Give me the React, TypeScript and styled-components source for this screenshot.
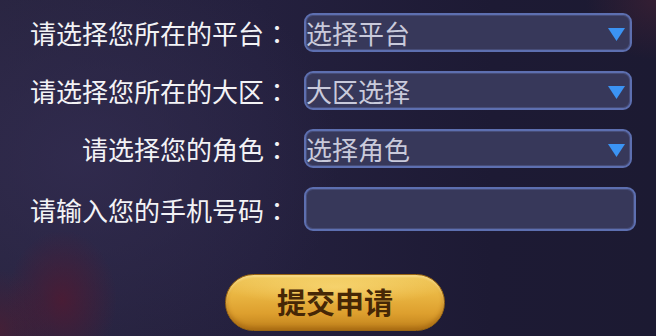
import React from "react";
import styled, { createGlobalStyle } from "styled-components";

const Global = createGlobalStyle`
  html, body { margin: 0; padding: 0; }
  body {
    width: 656px;
    height: 336px;
    overflow: hidden;
    font-family: "Noto Sans CJK SC", "Noto Sans", sans-serif;
  }
`;

const Page = styled.div`
  position: relative;
  width: 656px;
  height: 336px;
  overflow: hidden;
  background:
    radial-gradient(ellipse 55px 70px at 62px 300px, rgba(80, 26, 50, 0.8), rgba(80, 26, 50, 0) 100%),
    radial-gradient(ellipse 50px 60px at 0px 330px, rgba(85, 28, 48, 0.6), rgba(85, 28, 48, 0) 100%),
    radial-gradient(ellipse 70px 60px at 656px 0px, rgba(72, 34, 52, 0.55), rgba(72, 34, 52, 0) 100%),
    radial-gradient(ellipse 260px 220px at 80px 160px, rgba(50, 44, 80, 0.85), rgba(50, 44, 80, 0) 100%),
    linear-gradient(90deg, #28243f 0%, #24203e 40%, #1d1a34 75%, #1c1a32 100%);
  display: flex;
  flex-direction: column;
`;

const Form = styled.div`
  display: grid;
  grid-template-columns: 290px 332px;
  column-gap: 14px;
  row-gap: 19px;
  padding-top: 13px;
  align-items: center;
`;

const Label = styled.div`
  color: #f3f3f6;
  font-family: "Noto Sans CJK SC", "Noto Sans CJK JP", sans-serif;
  font-size: 26px;
  line-height: 39px;
  text-align: right;
  white-space: nowrap;
`;

const Colon = styled.span`
  font-family: "Noto Sans CJK JP", sans-serif;
`;

const Select = styled.div`
  box-sizing: border-box;
  width: 328px;
  height: 39px;
  border: 2px solid #5d6fb0;
  border-radius: 9px;
  background: #37385a;
  box-shadow: inset 0 0 0 1px rgba(120, 140, 210, 0.25);
  display: flex;
  align-items: center;
  justify-content: space-between;
  padding: 0 5px 0 0;
`;

const SelectText = styled.span`
  color: #c9cadb;
  font-size: 26px;
  line-height: 1;
  margin-top: 1px;
`;

const Arrow = styled.svg`
  width: 17px;
  height: 13px;
  margin-top: 4px;
`;

const Input = styled.input`
  box-sizing: border-box;
  width: 332px;
  height: 44px;
  border: 2px solid #5d6fb0;
  border-radius: 9px;
  background: #37385a;
  box-shadow: inset 0 0 0 1px rgba(120, 140, 210, 0.25);
  outline: none;
  color: #c9cadb;
  font-size: 22px;
  font-family: inherit;
  padding: 0 8px;
`;

const Footer = styled.div`
  padding: 43px 0 0 225px;
`;

const SubmitButton = styled.button`
  width: 220px;
  height: 57px;
  border-radius: 29px;
  border: 1.5px solid #9a6612;
  background:
    radial-gradient(ellipse 110px 18px at 50% 22%, rgba(255, 230, 140, 0.5), rgba(255, 230, 140, 0) 100%),
    linear-gradient(180deg, #f0c95c 0%, #eab642 35%, #dd9f2e 70%, #bf801a 100%);
  box-shadow: inset 0 -3px 4px rgba(140, 80, 10, 0.45), inset 0 2px 2px rgba(255, 240, 180, 0.5);
  color: #462706;
  font-family: "Noto Sans CJK SC", sans-serif;
  font-weight: 700;
  font-size: 29px;
  line-height: 1;
  padding: 0 0 2px;
  cursor: pointer;
`;

const fields: { label: string; placeholder?: string }[] = [
  { label: "请选择您所在的平台", placeholder: "选择平台" },
  { label: "请选择您所在的大区", placeholder: "大区选择" },
  { label: "请选择您的角色", placeholder: "选择角色" },
  { label: "请输入您的手机号码" },
];

export default function App() {
  return (
    <Page>
      <Global />
      <Form>
        {fields.map((f) => (
          <React.Fragment key={f.label}>
            <Label>
              {f.label}
              <Colon>：</Colon>
            </Label>
            {f.placeholder ? (
              <Select>
                <SelectText>{f.placeholder}</SelectText>
                <Arrow viewBox="0 0 17 13">
                  <path d="M0 0 H17 L8.5 13 Z" fill="#3b93f3" />
                </Arrow>
              </Select>
            ) : (
              <Input type="text" />
            )}
          </React.Fragment>
        ))}
      </Form>
      <Footer>
        <SubmitButton>提交申请</SubmitButton>
      </Footer>
    </Page>
  );
}
